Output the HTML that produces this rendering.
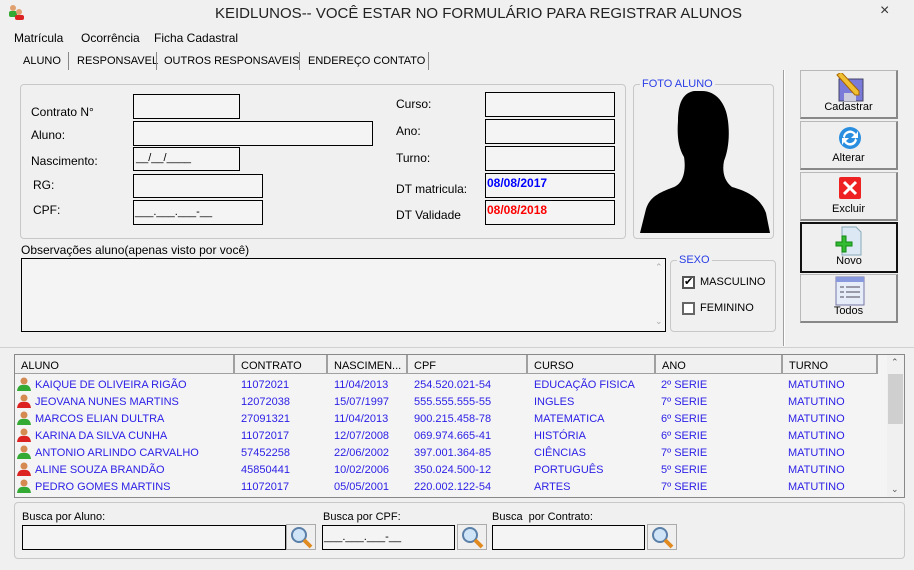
<!DOCTYPE html>
<html><head><meta charset="utf-8"><style>
*{margin:0;padding:0;box-sizing:border-box}
body{width:914px;height:570px;background:#f0f0f0;font-family:"Liberation Sans",sans-serif;font-size:11px;color:#000;position:relative;overflow:hidden}
.a{position:absolute;white-space:nowrap}
.box{position:absolute;border:1px solid #000;background:#f4f4f4}
.grp{position:absolute;border:1px solid #c8c8c8;border-radius:4px}
.btn{position:absolute;left:800px;width:98px;background:#efefef;border:1px solid #b8b8b8;border-right:2px solid #888;border-bottom:2px solid #888;text-align:center}
.btn span{position:absolute;left:0;right:0;bottom:4px;font-size:11px}
.row{position:absolute;left:16px;height:17px;width:870px;color:#2a1ee6}
.row div{position:absolute;top:3px;white-space:nowrap}
.hd{position:absolute;top:355px;height:19px;border-right:2px solid #a0a0a0;background:#f0f0f0;padding:5px 0 0 6px;border-bottom:1px solid #a0a0a0}
.ic{position:absolute;left:1px;top:1px;width:14px;height:14px}
.lens{position:absolute;width:30px;height:26px;border:1px solid #aaa;background:#efefef}
</style></head><body>
<div class="a" style="left:0;top:0;width:914px;height:25px;background:#f0f0f0"></div>
<svg class="a" style="left:8px;top:4px" width="16" height="16"><circle cx="5" cy="4" r="3" fill="#e0a070"/><rect x="1" y="7" width="8" height="6" fill="#3a3" rx="2"/><circle cx="11" cy="8" r="3" fill="#e0a070"/><rect x="7" y="11" width="9" height="5" fill="#d22" rx="2"/></svg>
<div class="a" style="left:215px;top:5px;font-size:15px;color:#222">KEIDLUNOS-- VOCÊ ESTAR NO FORMULÁRIO PARA REGISTRAR ALUNOS</div>
<div class="a" style="left:880px;top:2px;font-size:16px;color:#333">×</div>
<div class="a" style="left:14px;top:31px;font-size:12px">Matrícula</div>
<div class="a" style="left:81px;top:31px;font-size:12px">Ocorrência</div>
<div class="a" style="left:154px;top:31px;font-size:12px">Ficha Cadastral</div>
<div class="a" style="left:23px;top:55px">ALUNO</div>
<div class="a" style="left:68px;top:52px;height:18px;border-left:1px solid #888"></div>
<div class="a" style="left:77px;top:55px">RESPONSAVEL</div>
<div class="a" style="left:156px;top:52px;height:18px;border-left:1px solid #888"></div>
<div class="a" style="left:164px;top:55px">OUTROS RESPONSAVEIS</div>
<div class="a" style="left:299px;top:52px;height:18px;border-left:1px solid #888"></div>
<div class="a" style="left:308px;top:55px">ENDEREÇO CONTATO</div>
<div class="a" style="left:428px;top:52px;height:18px;border-left:1px solid #888"></div>
<div class="grp" style="left:20px;top:84px;width:606px;height:155px"></div>
<div class="a" style="left:31px;top:105px;font-size:12px">Contrato N°</div>
<div class="a" style="left:31px;top:128px;font-size:12px">Aluno:</div>
<div class="a" style="left:31px;top:154px;font-size:12px">Nascimento:</div>
<div class="a" style="left:33px;top:178px;font-size:12px">RG:</div>
<div class="a" style="left:33px;top:203px;font-size:12px">CPF:</div>
<div class="box" style="left:133px;top:94px;width:107px;height:25px"></div>
<div class="box" style="left:133px;top:121px;width:240px;height:25px"></div>
<div class="box" style="left:133px;top:147px;width:107px;height:24px"><span class="a" style="left:2px;top:4px">__/__/____</span></div>
<div class="box" style="left:133px;top:174px;width:130px;height:24px"></div>
<div class="box" style="left:133px;top:200px;width:130px;height:25px"><span class="a" style="left:1px;top:5px">___.___.___-__</span></div>
<div class="a" style="left:396px;top:97px;font-size:12px">Curso:</div>
<div class="a" style="left:396px;top:124px;font-size:12px">Ano:</div>
<div class="a" style="left:396px;top:151px;font-size:12px">Turno:</div>
<div class="a" style="left:396px;top:182px;font-size:12px">DT matricula:</div>
<div class="a" style="left:396px;top:208px;font-size:12px">DT Validade</div>
<div class="box" style="left:485px;top:92px;width:130px;height:25px"></div>
<div class="box" style="left:485px;top:119px;width:130px;height:25px"></div>
<div class="box" style="left:485px;top:146px;width:130px;height:25px"></div>
<div class="box" style="left:485px;top:173px;width:130px;height:25px"><span class="a" style="left:1px;top:2px;color:#0000ff;font-weight:bold;font-size:12px">08/08/2017</span></div>
<div class="box" style="left:485px;top:200px;width:130px;height:25px"><span class="a" style="left:1px;top:2px;color:#ff0000;font-weight:bold;font-size:12px">08/08/2018</span></div>
<div class="grp" style="left:633px;top:84px;width:141px;height:155px"></div>
<div class="a" style="left:640px;top:78px;background:#f0f0f0;color:#2a3ee6;padding:0 2px">FOTO ALUNO</div>
<svg class="a" style="left:636px;top:89px" width="136" height="144"><path d="M58 2 C46 4 42 16 42 32 C41 46 42 58 48 68 C50 80 48 94 38 98 C22 104 14 108 10 120 L4 144 L134 144 L130 124 C124 108 110 102 96 98 C88 92 86 82 88 72 C92 62 94 48 92 32 C90 14 80 2 66 2 Z" fill="#000"/></svg>
<div class="a" style="left:21px;top:243px;font-size:12px">Observações aluno(apenas visto por você)</div>
<div class="box" style="left:21px;top:258px;width:645px;height:74px"></div>
<div class="a" style="left:655px;top:262px;color:#aaa;font-size:9px">⌃</div>
<div class="a" style="left:655px;top:316px;color:#aaa;font-size:9px">⌄</div>
<div class="grp" style="left:670px;top:260px;width:106px;height:72px"></div>
<div class="a" style="left:677px;top:254px;background:#f0f0f0;color:#2a3ee6;padding:0 2px">SEXO</div>
<div class="a" style="left:682px;top:276px;width:13px;height:13px;border:2px solid #555;background:#fff;font-size:11px;line-height:9px;text-align:center">✔</div>
<div class="a" style="left:700px;top:276px">MASCULINO</div>
<div class="a" style="left:682px;top:302px;width:13px;height:13px;border:2px solid #666;background:#fff"></div>
<div class="a" style="left:700px;top:302px">FEMININO</div>
<div class="a" style="left:783px;top:70px;height:276px;border-left:1px solid #a0a0a0;border-right:1px solid #fff"></div>
<div class="a" style="left:0;top:347px;width:914px;border-top:1px solid #d0d0d0"></div>
<div class="btn" style="top:70px;height:49px"><svg class="a" style="left:34px;top:2px" width="30" height="30"><rect x="4" y="6" width="24" height="22" fill="#7a7ad8" stroke="#446"/><rect x="9" y="20" width="12" height="8" fill="#ccd"/><path d="M2 2 L20 22 L24 22 L24 18 L6 -1Z" fill="#f0c030" stroke="#a60"/></svg><span>Cadastrar</span></div>
<div class="btn" style="top:121px;height:49px"><svg class="a" style="left:36px;top:3px" width="26" height="26"><circle cx="13" cy="13" r="11" fill="#2a8ee0"/><path d="M6 12 A7 7 0 0 1 19 9 L21 6 L21 13 L14 13 L17 10 A5 5 0 0 0 8 13Z M20 15 A7 7 0 0 1 7 17 L5 20 L5 13 L12 13 L9 16 A5 5 0 0 0 18 13Z" fill="#fff"/></svg><span>Alterar</span></div>
<div class="btn" style="top:172px;height:49px"><svg class="a" style="left:37px;top:3px" width="24" height="24"><rect x="1" y="1" width="22" height="22" rx="2" fill="#e22"/><path d="M6 6 L18 18 M18 6 L6 18" stroke="#fff" stroke-width="3"/></svg><span>Excluir</span></div>
<div class="btn" style="top:222px;height:51px;border:2px solid #111"><svg class="a" style="left:32px;top:2px" width="30" height="30"><path d="M8 1 L22 1 L27 6 L27 29 L8 29Z" fill="#dce8f4" stroke="#8ab"/><path d="M2 16 H8 V10 H12 V16 H18 V20 H12 V26 H8 V20 H2Z" fill="#3b3" stroke="#181"/></svg><span>Novo</span></div>
<div class="btn" style="top:274px;height:49px"><svg class="a" style="left:34px;top:1px" width="30" height="30"><rect x="1" y="1" width="28" height="28" fill="#e6ecf8" stroke="#77a"/><rect x="1" y="1" width="28" height="5" fill="#8899dd"/><path d="M5 11h4M11 11h14M5 16h4M11 16h14M5 21h4M11 21h14" stroke="#99a" stroke-width="2"/></svg><span>Todos</span></div>
<div class="a" style="left:14px;top:354px;width:891px;height:144px;border:1px solid #888;background:#f4f4f4"></div>
<div class="hd" style="left:15px;width:220px">ALUNO</div>
<div class="hd" style="left:235px;width:93px">CONTRATO</div>
<div class="hd" style="left:328px;width:80px">NASCIMEN...</div>
<div class="hd" style="left:408px;width:120px">CPF</div>
<div class="hd" style="left:528px;width:128px">CURSO</div>
<div class="hd" style="left:656px;width:127px">ANO</div>
<div class="hd" style="left:783px;width:95px">TURNO</div>
<div class="a" style="left:887px;top:355px;width:17px;height:142px;background:#f0f0f0"></div>
<div class="a" style="left:888px;top:374px;width:15px;height:50px;background:#cfcfcf"></div>
<div class="a" style="left:891px;top:357px;font-size:9px;color:#555">⌃</div>
<div class="a" style="left:891px;top:484px;font-size:9px;color:#555">⌄</div>
<div class="row" style="top:376px"><svg class="ic"><circle cx="7" cy="4" r="3.5" fill="#d48a50"/><path d="M0 14 Q1 7 7 8 Q13 7 14 14Z" fill="#3a3"/></svg><div style="left:19px">KAIQUE DE OLIVEIRA RIGÃO</div><div style="left:225px">11072021</div><div style="left:318px">11/04/2013</div><div style="left:398px">254.520.021-54</div><div style="left:518px">EDUCAÇÃO FISICA</div><div style="left:645px">2º SERIE</div><div style="left:772px">MATUTINO</div></div>
<div class="row" style="top:393px"><svg class="ic"><circle cx="7" cy="4" r="3.5" fill="#d48a50"/><path d="M0 14 Q1 7 7 8 Q13 7 14 14Z" fill="#d22"/></svg><div style="left:19px">JEOVANA NUNES MARTINS</div><div style="left:225px">12072038</div><div style="left:318px">15/07/1997</div><div style="left:398px">555.555.555-55</div><div style="left:518px">INGLES</div><div style="left:645px">7º SERIE</div><div style="left:772px">MATUTINO</div></div>
<div class="row" style="top:410px"><svg class="ic"><circle cx="7" cy="4" r="3.5" fill="#d48a50"/><path d="M0 14 Q1 7 7 8 Q13 7 14 14Z" fill="#3a3"/></svg><div style="left:19px">MARCOS ELIAN DULTRA</div><div style="left:225px">27091321</div><div style="left:318px">11/04/2013</div><div style="left:398px">900.215.458-78</div><div style="left:518px">MATEMATICA</div><div style="left:645px">6º SERIE</div><div style="left:772px">MATUTINO</div></div>
<div class="row" style="top:427px"><svg class="ic"><circle cx="7" cy="4" r="3.5" fill="#d48a50"/><path d="M0 14 Q1 7 7 8 Q13 7 14 14Z" fill="#d22"/></svg><div style="left:19px">KARINA DA SILVA CUNHA</div><div style="left:225px">11072017</div><div style="left:318px">12/07/2008</div><div style="left:398px">069.974.665-41</div><div style="left:518px">HISTÓRIA</div><div style="left:645px">6º SERIE</div><div style="left:772px">MATUTINO</div></div>
<div class="row" style="top:444px"><svg class="ic"><circle cx="7" cy="4" r="3.5" fill="#d48a50"/><path d="M0 14 Q1 7 7 8 Q13 7 14 14Z" fill="#3a3"/></svg><div style="left:19px">ANTONIO ARLINDO CARVALHO</div><div style="left:225px">57452258</div><div style="left:318px">22/06/2002</div><div style="left:398px">397.001.364-85</div><div style="left:518px">CIÊNCIAS</div><div style="left:645px">7º SERIE</div><div style="left:772px">MATUTINO</div></div>
<div class="row" style="top:461px"><svg class="ic"><circle cx="7" cy="4" r="3.5" fill="#d48a50"/><path d="M0 14 Q1 7 7 8 Q13 7 14 14Z" fill="#d22"/></svg><div style="left:19px">ALINE SOUZA BRANDÃO</div><div style="left:225px">45850441</div><div style="left:318px">10/02/2006</div><div style="left:398px">350.024.500-12</div><div style="left:518px">PORTUGUÊS</div><div style="left:645px">5º SERIE</div><div style="left:772px">MATUTINO</div></div>
<div class="row" style="top:478px"><svg class="ic"><circle cx="7" cy="4" r="3.5" fill="#d48a50"/><path d="M0 14 Q1 7 7 8 Q13 7 14 14Z" fill="#3a3"/></svg><div style="left:19px">PEDRO GOMES MARTINS</div><div style="left:225px">11072017</div><div style="left:318px">05/05/2001</div><div style="left:398px">220.002.122-54</div><div style="left:518px">ARTES</div><div style="left:645px">7º SERIE</div><div style="left:772px">MATUTINO</div></div>
<div class="grp" style="left:14px;top:502px;width:891px;height:57px"></div>
<div class="a" style="left:22px;top:511px">Busca por Aluno:</div>
<div class="box" style="left:22px;top:525px;width:264px;height:25px"></div>
<div class="a" style="left:323px;top:511px">Busca por CPF:</div>
<div class="box" style="left:322px;top:525px;width:133px;height:25px"><span class="a" style="left:1px;top:5px">___.___.___-__</span></div>
<div class="a" style="left:492px;top:511px">Busca &nbsp;por Contrato:</div>
<div class="box" style="left:492px;top:525px;width:153px;height:25px"></div>
<div class="lens" style="left:286px;top:524px"><svg width="28" height="24"><circle cx="12" cy="10" r="7" fill="#cfe4f7" stroke="#5a7fa8" stroke-width="2"/><path d="M17 15 L24 22" stroke="#e08a20" stroke-width="4"/></svg></div>
<div class="lens" style="left:457px;top:524px"><svg width="28" height="24"><circle cx="12" cy="10" r="7" fill="#cfe4f7" stroke="#5a7fa8" stroke-width="2"/><path d="M17 15 L24 22" stroke="#e08a20" stroke-width="4"/></svg></div>
<div class="lens" style="left:647px;top:524px"><svg width="28" height="24"><circle cx="12" cy="10" r="7" fill="#cfe4f7" stroke="#5a7fa8" stroke-width="2"/><path d="M17 15 L24 22" stroke="#e08a20" stroke-width="4"/></svg></div>
</body></html>
